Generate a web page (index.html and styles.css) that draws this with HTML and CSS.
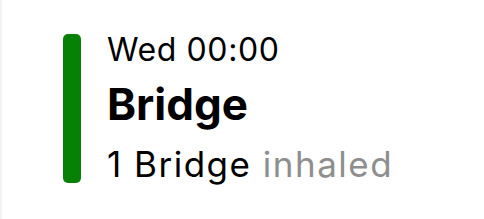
FILE: index.html
```html
<!DOCTYPE html>
<html lang="en">
<head>
    <meta charset="UTF-8">
    <meta name="viewport" content="width=device-width, initial-scale=1.0">
    <title>Log entry</title>
    <link rel="stylesheet" href="styles.css">
</head>
<body>

<div class="entry">
    <div class="entry-bar"></div>
    <div class="entry-text">
        <div class="entry-time">Wed 00:00</div>
        <div class="entry-title">Bridge</div>
        <div class="entry-detail">1 Bridge <span class="entry-action">inhaled</span></div>
    </div>
</div>

</body>
</html>
```

FILE: styles.css
```css
body {
    font-family: 'Inter', 'Liberation Sans', sans-serif;
    margin: 0;
    padding: 0;
    background: #ffffff;
    color: #000;
}
.entry {
    display: flex;
    align-items: flex-start;
    height: 219px;
    box-sizing: border-box;
    padding: 30px 0 0 61px;
    border-left: 2px solid #f2f2f6;
}
.entry-bar {
    flex: 0 0 18px;
    height: 149px;
    margin-top: 4px;
    background-color: #068106;
    border-radius: 5px;
}
.entry-text {
    margin-left: 26px;
}
.entry-time {
    font-size: 32px;
    line-height: 40px;
    letter-spacing: 0.6px;
}
.entry-title {
    font-size: 44px;
    font-weight: 700;
    line-height: 68px;
}
.entry-detail {
    font-size: 35px;
    line-height: 52px;
    letter-spacing: 1.5px;
}
.entry-action {
    color: #8e8e8e;
}
```
